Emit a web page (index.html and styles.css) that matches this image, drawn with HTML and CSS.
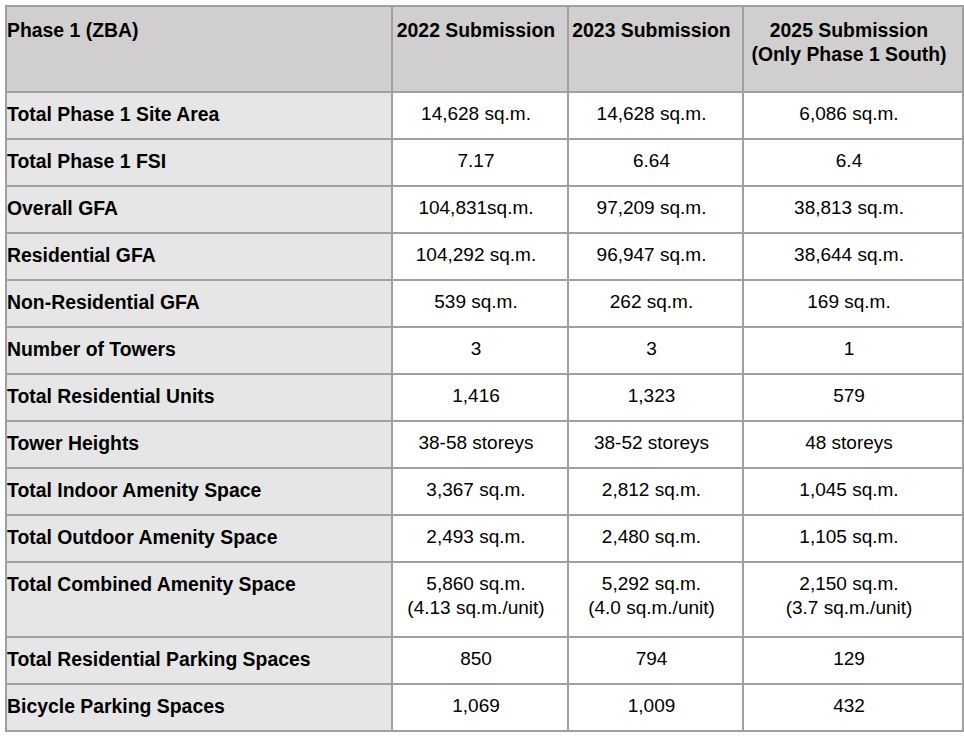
FILE: index.html
```html
<!DOCTYPE html>
<html>
<head>
<meta charset="utf-8">
<link rel="stylesheet" href="styles.css">
</head>
<body>
<div class="wrap">
<table class="cmp">
  <colgroup>
    <col class="c1"><col class="c2"><col class="c3"><col class="c4">
  </colgroup>
  <thead>
    <tr class="head">
      <th class="lbl">Phase 1 (ZBA)</th>
      <th>2022 Submission</th>
      <th>2023 Submission</th>
      <th>2025 Submission<br>(Only Phase 1 South)</th>
    </tr>
  </thead>
  <tbody>
    <tr><th class="lbl">Total Phase 1 Site Area</th><td>14,628 sq.m.</td><td>14,628 sq.m.</td><td>6,086 sq.m.</td></tr>
    <tr><th class="lbl">Total Phase 1 FSI</th><td>7.17</td><td>6.64</td><td>6.4</td></tr>
    <tr><th class="lbl">Overall GFA</th><td>104,831sq.m.</td><td>97,209 sq.m.</td><td>38,813 sq.m.</td></tr>
    <tr><th class="lbl">Residential GFA</th><td>104,292 sq.m.</td><td>96,947 sq.m.</td><td>38,644 sq.m.</td></tr>
    <tr><th class="lbl">Non-Residential GFA</th><td>539 sq.m.</td><td>262 sq.m.</td><td>169 sq.m.</td></tr>
    <tr><th class="lbl">Number of Towers</th><td>3</td><td>3</td><td>1</td></tr>
    <tr><th class="lbl">Total Residential Units</th><td>1,416</td><td>1,323</td><td>579</td></tr>
    <tr><th class="lbl">Tower Heights</th><td>38-58 storeys</td><td>38-52 storeys</td><td>48 storeys</td></tr>
    <tr><th class="lbl">Total Indoor Amenity Space</th><td>3,367 sq.m.</td><td>2,812 sq.m.</td><td>1,045 sq.m.</td></tr>
    <tr><th class="lbl">Total Outdoor Amenity Space</th><td>2,493 sq.m.</td><td>2,480 sq.m.</td><td>1,105 sq.m.</td></tr>
    <tr class="tall"><th class="lbl">Total Combined Amenity Space</th><td>5,860 sq.m.<br>(4.13 sq.m./unit)</td><td>5,292 sq.m.<br>(4.0 sq.m./unit)</td><td>2,150 sq.m.<br>(3.7 sq.m./unit)</td></tr>
    <tr><th class="lbl">Total Residential Parking Spaces</th><td>850</td><td>794</td><td>129</td></tr>
    <tr><th class="lbl">Bicycle Parking Spaces</th><td>1,069</td><td>1,009</td><td>432</td></tr>
  </tbody>
</table>
</div>
</body>
</html>
```

FILE: styles.css
```css
html, body {
  margin: 0;
  padding: 0;
  background: #ffffff;
}

.wrap {
  padding: 5px 0 0 5px;
}

.cmp {
  border-collapse: collapse;
  table-layout: fixed;
  width: 957px;
  font-family: "Liberation Sans", Arial, sans-serif;
  font-size: 19px;
  line-height: 24px;
  color: #000;
}

.c1 { width: 386px; }
.c2 { width: 176px; }
.c3 { width: 175px; }
.c4 { width: 220px; }

.cmp th,
.cmp td {
  border: 2px solid #a0a0a0;
  padding: 9px 8px 12px 0;
  vertical-align: top;
  text-align: center;
  white-space: nowrap;
}

.cmp td {
  font-weight: normal;
  background: #ffffff;
}

.cmp th {
  font-weight: bold;
  font-size: 19.4px;
}

.cmp th.lbl {
  text-align: left;
  padding-left: 0;
  background: #e7e6e6;
}

.head th,
.head th.lbl {
  background: #d0cece;
  padding-top: 11px;
  padding-bottom: 25px;
}

.tall th,
.tall td {
  padding-bottom: 16px;
}
```
